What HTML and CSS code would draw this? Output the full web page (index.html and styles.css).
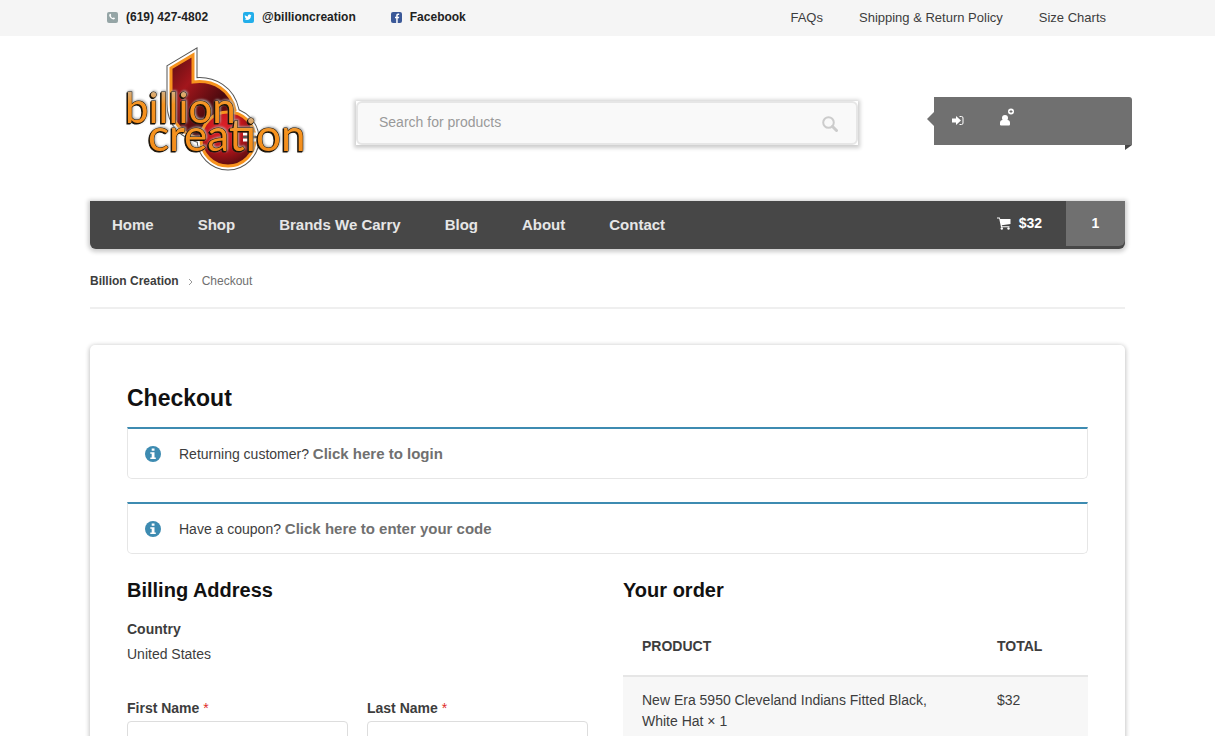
FILE: index.html
```html
<!DOCTYPE html>
<html lang="en">
<head>
    <meta charset="UTF-8">
    <meta name="viewport" content="width=device-width, initial-scale=1.0">
    <title>Checkout - Billion Creation</title>
    <link rel="stylesheet" href="styles.css">
</head>
<body>
    <div class="top-bar">
        <div class="container top-bar-inner">
            <ul class="contact-list">
                <li><a href="#">
                    <svg class="contact-icon" viewBox="0 0 12 12"><rect x="1" y="1" width="11" height="11" rx="2" fill="#95a5a6"/><path d="M3.600 3.200c.8-.7 1.200-.4 1.600.8.2.6-.5.6-.4 1 .3.8 1.100 1.700 2 2 .5.100.5-.6 1-.4 1.200.4 1.500.9.800 1.500C7 9.500 3 6.500 3.200 4z" fill="#fff"/></svg>
                    <span>(619) 427-4802</span></a></li>
                <li><a href="#">
                    <svg class="contact-icon" viewBox="0 0 12 12"><rect x="1" y="1" width="11" height="11" rx="2" fill="#22aeea"/><path d="M2.500 8.200c.8 0 1.300-.1 1.700-.5-.6-.1-.9-.4-1.100-.9h.5c-.6-.2-.9-.7-.9-1.300l.5.1c-.5-.4-.6-1-.3-1.600.8 1 1.700 1.400 3 1.500-.2-1.800 1.600-2.400 2.500-1.500l.9-.3-.5.8.7-.2-.6.7C8.900 8.600 5.200 10 2.500 8.200z" fill="#fff"/></svg>
                    <span>@billioncreation</span></a></li>
                <li><a href="#">
                    <svg class="contact-icon" viewBox="0 0 12 12"><rect x="1" y="1" width="11" height="11" rx="2" fill="#3b5998"/><path d="M6.200 12V7.200H5V5.700h1.200V4.600c0-1.300.7-2 1.900-2h1.100V4h-.8c-.5 0-.7.2-.7.700v1h1.500L9 7.200H7.700V12z" fill="#fff"/></svg>
                    <span>Facebook</span></a></li>
            </ul>
            <ul class="info-links">
                <li><a href="#">FAQs</a></li>
                <li><a href="#">Shipping &amp; Return Policy</a></li>
                <li><a href="#">Size Charts</a></li>
            </ul>
        </div>
    </div>

    <header class="container site-header">
        <a class="logo" href="#" aria-label="Billion Creation">
            <svg viewBox="115 40 210 140" width="210" height="140">
                <defs>
                    <linearGradient id="red" x1="0" y1="0" x2="1" y2="1">
                        <stop offset="0" stop-color="#5a0d12"/>
                        <stop offset=".3" stop-color="#a3161c"/>
                        <stop offset=".65" stop-color="#4a0a0e"/>
                        <stop offset="1" stop-color="#b0151b"/>
                    </linearGradient>
                    <radialGradient id="disk" cx=".4" cy=".3" r=".7">
                        <stop offset="0" stop-color="#e0222a"/>
                        <stop offset=".5" stop-color="#c4161c"/>
                        <stop offset="1" stop-color="#5c0c10"/>
                    </radialGradient>
                    <linearGradient id="gold" x1="0" y1="0" x2="0" y2="1">
                        <stop offset=".1" stop-color="#c9b9a4"/>
                        <stop offset=".45" stop-color="#f7931e"/>
                        <stop offset="1" stop-color="#f08a1c"/>
                    </linearGradient>
                    <path id="stem" d="M171 68L193 55V82C214 79 231 91 235 110L205 140C182 136 171 122 171 104Z"/>
                    <circle id="ring" cx="228" cy="139" r="27"/>
                </defs>
                <g fill="#555" stroke="#555" stroke-width="9">
                    <use href="#stem"/>
                    <use href="#ring"/>
                </g>
                <g fill="#fff" stroke="#fff" stroke-width="7">
                    <use href="#stem"/>
                    <use href="#ring"/>
                </g>
                <g stroke="#f7931e" stroke-width="3">
                    <use href="#stem" fill="url(#red)"/>
                    <use href="#ring" fill="url(#disk)"/>
                </g>
                <path d="M243 134h14M243 140h15" stroke="#fff" stroke-width="3"/>
                <path d="M243 137h15" stroke="#555" stroke-width="2"/>
                <g class="logo-text">
                    <text class="logo-first" x="125" y="123">billion</text>
                    <text class="logo-second" x="148" y="151">creation</text>
                </g>
            </svg>
        </a>

        <form class="search" onsubmit="return false">
            <input type="search" placeholder="Search for products" aria-label="Search for products">
            <button type="submit" aria-label="Search">
                <svg viewBox="0 0 16 16" width="16" height="16"><circle cx="6.500" cy="6.500" r="5.300" fill="none" stroke="#ccc" stroke-width="2"/><path d="M10.500 10.500l4 4" stroke="#ccc" stroke-width="3" stroke-linecap="round"/></svg>
            </button>
        </form>

        <div class="account">
            <a href="#" aria-label="Login">
                <svg viewBox="0 0 12 24" width="12" height="24"><path d="M0 10.500h4V8l5 4.500L4 17v-2.500H0z" fill="#fff"/><path d="M7.500 8.500h2a1.500 1.500 0 0 1 1.500 1.500v5a1.500 1.500 0 0 1-1.500 1.500h-2" fill="none" stroke="#fff"/></svg>
            </a>
            <a href="#" aria-label="Register">
                <svg viewBox="0 0 16 24" width="16" height="24"><circle cx="6" cy="10" r="3" fill="#fff"/><path d="M1 17v-2c0-2 1-3 2.500-3h5C10 12 11 13 11 15v1c0 1-.5 1.500-1.500 1.500h-7C1.500 17.500 1 17 1 17z" fill="#fff"/><circle cx="12" cy="3.500" r="3" fill="#fff"/><path d="M10.500 3.500h3M12 2v3" stroke="#707070"/></svg>
            </a>
        </div>
    </header>

    <nav class="container main-nav">
        <ul class="menu">
            <li><a href="#">Home</a></li>
            <li><a href="#">Shop</a></li>
            <li><a href="#">Brands We Carry</a></li>
            <li><a href="#">Blog</a></li>
            <li><a href="#">About</a></li>
            <li><a href="#">Contact</a></li>
        </ul>
        <a class="cart" href="#">
            <span class="cart-total">
                <svg viewBox="0 0 14 13" width="14" height="13"><path d="M0 .5h2.800L3.200 2H13.500v5L4.800 8.200l.2 1H12.500v1H4L2.200 1.500H0z" fill="#fff"/><circle cx="4.800" cy="11.500" r="1.200" fill="#fff"/><circle cx="11.500" cy="11.500" r="1.200" fill="#fff"/></svg>
                $32
            </span>
            <span class="cart-count">1</span>
        </a>
    </nav>

    <div class="container breadcrumb">
        <a href="#">Billion Creation</a>
        <svg viewBox="0 0 5 8" width="5" height="8"><path d="M1 1l3 3-3 3" fill="none" stroke="#999"/></svg>
        <span>Checkout</span>
    </div>

    <main class="container content">
        <h1>Checkout</h1>
        <div class="notice">
            <svg viewBox="0 0 16 16" width="16" height="16"><circle cx="8" cy="8" r="8" fill="#3d8bb1"/><path d="M6.700 2.500h2.800v2.200H6.700zM5.300 6.200h4.200v5.200h1.300V13H5.300v-1.600h1.400V7.800H5.300z" fill="#fff"/></svg>
            <p>Returning customer? <a href="#">Click here to login</a></p>
        </div>
        <div class="notice">
            <svg viewBox="0 0 16 16" width="16" height="16"><circle cx="8" cy="8" r="8" fill="#3d8bb1"/><path d="M6.700 2.500h2.800v2.200H6.700zM5.300 6.200h4.200v5.200h1.300V13H5.300v-1.600h1.400V7.800H5.300z" fill="#fff"/></svg>
            <p>Have a coupon? <a href="#">Click here to enter your code</a></p>
        </div>

        <form class="checkout" onsubmit="return false">
            <section class="billing">
                <h2>Billing Address</h2>
                <div class="country">
                    <strong>Country</strong>
                    <p>United States</p>
                </div>
                <div class="form-row">
                    <div class="field">
                        <label for="first-name">First Name <abbr>*</abbr></label>
                        <input type="text" id="first-name">
                    </div>
                    <div class="field">
                        <label for="last-name">Last Name <abbr>*</abbr></label>
                        <input type="text" id="last-name">
                    </div>
                </div>
            </section>
            <section class="order">
                <h2>Your order</h2>
                <table>
                    <thead>
                        <tr><th>Product</th><th class="total">Total</th></tr>
                    </thead>
                    <tbody>
                        <tr><td>New Era 5950 Cleveland Indians Fitted Black, White Hat × 1</td><td>$32</td></tr>
                    </tbody>
                </table>
            </section>
        </form>
    </main>
</body>
</html>
```
FILE: styles.css
```css
:root {
    --text: #3d3d3d;
    --heading: #111;
    --muted: #707070;
    --dark: #474747;
    --info: #3d8bb1;
    --line: #e6e6e6;
}

* {
    margin: 0;
    padding: 0;
    box-sizing: border-box;
}

body {
    background-color: #fff;
    color: var(--text);
    font-family: "Liberation Sans", Arial, sans-serif;
    font-size: 14px;
    line-height: 21px;
}

a {
    color: inherit;
    text-decoration: none;
}

ul {
    list-style: none;
}

svg {
    display: block;
    flex-shrink: 0;
}

.container {
    width: calc(100% - 40px);
    max-width: 1035px;
    margin: 0 auto;
}

/* top bar */
.top-bar {
    background-color: #f5f5f5;
}

.top-bar-inner,
.contact-list,
.info-links {
    display: flex;
    align-items: center;
}

.top-bar-inner {
    justify-content: space-between;
    min-height: 36px;
    padding: 0 19px 2px 16px;
}

.contact-list {
    gap: 34px;
    color: #222;
    font-size: 12px;
    font-weight: bold;
}

.contact-list a {
    display: flex;
    align-items: center;
    gap: 8px;
}

.contact-icon {
    width: 12px;
    height: 12px;
}

.info-links {
    gap: 36px;
    font-size: 13px;
}

/* header */
.site-header {
    display: flex;
    align-items: flex-start;
    padding: 4px 0 21px 25px;
}

.logo-text {
    fill: url(#gold);
    stroke: #1a1208;
    stroke-width: 1px;
    paint-order: stroke;
    font-family: Lato, sans-serif;
    filter: drop-shadow(-1px 1px 0 #1a1208) drop-shadow(1px -1px 1px #aaa);
}

.logo-first {
    font-size: 42px;
}

.logo-second {
    font-size: 44px;
}

.search {
    position: relative;
    flex: 1;
    margin: 61px 76px 0 31px;
    box-shadow: 0 1px 4px 2px rgba(0, 0, 0, 0.2);
}

.search input {
    display: block;
    width: 100%;
    height: 44px;
    padding: 0 60px 2px 21px;
    background-color: #f9f9f9;
    border: 2px solid var(--line);
    border-radius: 6px;
    color: var(--text);
    font: 14px "Liberation Sans", Arial, sans-serif;
}

.search input::placeholder {
    color: #999;
}

.search button {
    position: absolute;
    top: 15px;
    right: 20px;
    background: none;
    border: none;
    cursor: pointer;
}

.account {
    position: relative;
    display: flex;
    gap: 35px;
    width: 198px;
    height: 48px;
    margin: 57px -7px 0 0;
    padding: 11px 18px;
    background-color: var(--muted);
    border-top-right-radius: 3px;
}

.account::before,
.account::after {
    content: "";
    position: absolute;
    border: 7px solid transparent;
}

.account::before {
    top: 15px;
    right: 100%;
    border-left-width: 0;
    border-right-color: var(--muted);
}

.account::after {
    top: 100%;
    right: 0;
    border-width: 5px 7px 0 0;
    border-top-color: var(--dark);
}

/* navigation */
.main-nav {
    display: flex;
    justify-content: space-between;
    background-color: var(--dark);
    border-radius: 0 0 6px 6px;
    box-shadow: 0 1px 4px 2px rgba(0, 0, 0, 0.2);
    color: #e6e6e6;
    font-weight: bold;
}

.menu {
    display: flex;
}

.menu a {
    display: block;
    padding: 0 22px;
    font-size: 15px;
    line-height: 48px;
}

.cart {
    display: flex;
    color: #fff;
    line-height: 45px;
}

.cart-total {
    display: flex;
    align-items: center;
    gap: 8px;
    padding: 0 24px 3px 0;
}

.cart-count {
    width: 59px;
    margin-bottom: 3px;
    background-color: var(--muted);
    border-bottom-right-radius: 6px;
    text-align: center;
}

/* breadcrumb */
.breadcrumb {
    display: flex;
    align-items: center;
    gap: 9px;
    padding: 22px 0 15px;
    border-bottom: 2px solid #efefef;
    color: var(--muted);
    font-size: 12px;
}

.breadcrumb a {
    color: var(--text);
    font-weight: bold;
}

/* content */
.content {
    margin-top: 36px;
    padding: 37px;
    border-radius: 5px;
    box-shadow: 0 1px 4px 1px rgba(0, 0, 0, 0.22);
}

h1,
h2 {
    color: var(--heading);
}

h1 {
    margin-bottom: 13px;
    font-size: 23px;
    line-height: 32px;
}

h2 {
    font-size: 20px;
    line-height: 26px;
}

.notice {
    display: flex;
    align-items: center;
    gap: 18px;
    height: 52px;
    margin-bottom: 23px;
    padding: 1px 17px 0;
    border: 1px solid var(--line);
    border-top: 2px solid var(--info);
    border-radius: 0 0 5px 5px;
}

.notice a {
    color: var(--muted);
    font-size: 15px;
    font-weight: bold;
}

.checkout {
    display: grid;
    grid-template-columns: 461fr 465fr;
    gap: 35px;
}

.country {
    margin: 14px 0 31px;
    line-height: 25px;
}

.form-row {
    display: flex;
    gap: 19px;
}

.field {
    flex: 1;
}

.field label {
    display: block;
    margin-bottom: 2px;
    font-weight: bold;
}

.field abbr {
    color: #e02b2b;
    font-weight: normal;
}

.field input {
    width: 100%;
    height: 42px;
    padding: 0 12px;
    border: 1px solid #ddd;
    border-radius: 4px;
    font: inherit;
}

table {
    width: 100%;
    margin-top: 14px;
    border-collapse: collapse;
    table-layout: fixed;
}

th,
td {
    padding: 19px;
    text-align: left;
    vertical-align: top;
}

th {
    padding-bottom: 18px;
    border-bottom: 2px solid var(--line);
    text-transform: uppercase;
}

.total {
    width: 110px;
}

td {
    padding: 13px 19px;
    background-color: #f7f7f7;
}
```
